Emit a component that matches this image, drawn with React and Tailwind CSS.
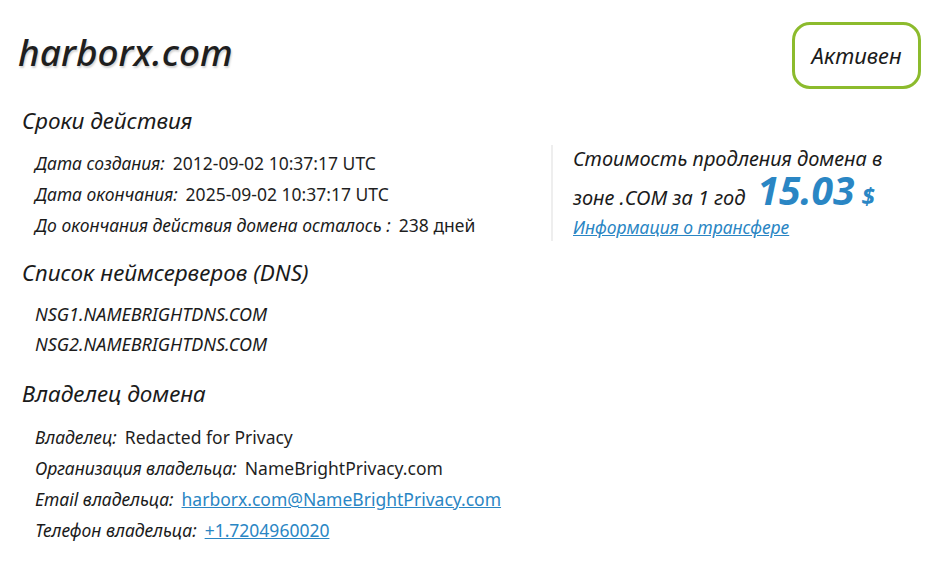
import React from 'react';

const font = { fontFamily: '"Noto Sans", "Open Sans", sans-serif' };

function Row({ label, children }) {
  return (
    <div className="flex items-baseline h-[31px] text-[17.5px] leading-[31px]">
      <span className="italic text-[#1b1b1b]">{label}</span>
      <span className="ml-[8px] text-[#1f1f1f]">{children}</span>
    </div>
  );
}

function Heading({ children }) {
  return <h2 className="text-[22.5px] italic text-[#1b1b1b] leading-[28px]">{children}</h2>;
}

export default function App() {
  return (
    <div className="w-[939px] h-[564px] bg-white px-[18px] pt-[22px]" style={font}>
      <div className="flex items-start justify-between">
        <h1 className="mt-[8px] text-[37px] leading-[44px] italic font-medium text-[#1f1f1f] [text-shadow:1px_2px_2px_rgba(0,0,0,0.18)]">
          harborx.com
        </h1>
        <div className="w-[129px] h-[67px] rounded-[18px] border-[3px] border-[#8cbb2d] flex items-center justify-center text-[22px] italic text-[#1b1b1b]">
          Активен
        </div>
      </div>

      <div className="mt-[18px] pl-[4px]">
        <Heading>Сроки действия</Heading>
        <div className="flex mt-[13px]">
          <div className="w-[529px] pl-[13px]">
            <Row label="Дата создания:">2012-09-02 10:37:17 UTC</Row>
            <Row label="Дата окончания:">2025-09-02 10:37:17 UTC</Row>
            <div className="h-[33px]">
              <Row label="До окончания действия домена осталось :">238 дней</Row>
            </div>
          </div>
          <div className="mt-[-3px] h-[96px] border-l-2 border-[#eeeeee] pl-[20px]">
            <div className="h-[24px] text-[20px] italic text-[#1b1b1b] leading-[24px] mt-[2px]">
              Стоимость продления домена в
            </div>
            <div className="flex items-baseline h-[38px] text-[20px] italic text-[#1b1b1b] leading-[24px]">
              <span>зоне .COM за 1 год</span>
              <span className="ml-[12px] text-[39px] leading-[38px] font-bold text-[#2a86c4]">15.03</span>
              <span className="ml-[7px] text-[24px] leading-[24px] font-bold text-[#2a86c4]">$</span>
            </div>
            <a href="#" className="block mt-[7px] text-[17.5px] italic text-[#2a86c4] underline leading-[22px]">
              Информация о трансфере
            </a>
          </div>
        </div>

        <div className="mt-[16px]">
          <Heading>Список неймсерверов (DNS)</Heading>
          <div className="pl-[13px] mt-[12px]">
            <div className="h-[30px] leading-[30px] text-[18px] italic text-[#1b1b1b]">NSG1.NAMEBRIGHTDNS.COM</div>
            <div className="h-[30px] leading-[30px] text-[18px] italic text-[#1b1b1b]">NSG2.NAMEBRIGHTDNS.COM</div>
          </div>
        </div>

        <div className="mt-[21px]">
          <Heading>Владелец домена</Heading>
          <div className="pl-[13px] mt-[14px]">
            <Row label="Владелец:">Redacted for Privacy</Row>
            <Row label="Организация владельца:">NameBrightPrivacy.com</Row>
            <Row label="Email владельца:">
              <a href="#" className="text-[#2a86c4] underline">harborx.com@NameBrightPrivacy.com</a>
            </Row>
            <Row label="Телефон владельца:">
              <a href="#" className="text-[#2a86c4] underline">+1.7204960020</a>
            </Row>
          </div>
        </div>
      </div>
    </div>
  );
}
